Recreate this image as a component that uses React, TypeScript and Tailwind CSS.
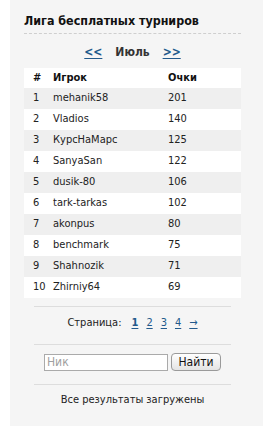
const players: [string, number][] = [
  ["mehanik58", 201],
  ["Vladios", 140],
  ["КурсНаМарс", 125],
  ["SanyaSan", 122],
  ["dusik-80", 106],
  ["tark-tarkas", 102],
  ["akonpus", 80],
  ["benchmark", 75],
  ["Shahnozik", 71],
  ["Zhirniy64", 69],
];

const link = "text-[#235a8c] underline underline-offset-2";

export default function App() {
  return (
    <div className="flex min-h-[426px] bg-white font-['DejaVu_Sans_Condensed','DejaVu_Sans',sans-serif] text-[11px] text-[#222]">
      <div className="ml-[10px] flex-1 bg-[#f5f5f5] pl-[14px] pt-[13px]">
        <div className="w-[217px]">
          <h2 className="text-[12.4px] font-bold leading-[15px] text-[#111]">
            Лига бесплатных турниров
          </h2>
          <div className="mt-[5px] border-t border-dashed border-[#cfcfcf]" />

          <div className="mt-[10px] flex h-[16px] items-center justify-center gap-[13px] text-[12px] font-bold">
            <a href="#" className={link}>
              &lt;&lt;
            </a>
            <span className="text-[#333]">Июль</span>
            <a href="#" className={link}>
              &gt;&gt;
            </a>
          </div>

          <div className="mt-[8px]">
            <div className="flex h-[20px] items-center bg-white pl-[9px] font-bold text-[#111]">
              <span className="w-[20px]">#</span>
              <span className="w-[115px]">Игрок</span>
              <span>Очки</span>
            </div>
            {players.map(([name, pts], i) => (
              <div
                key={name}
                className={
                  "flex h-[21px] items-center pl-[9px] " +
                  (i % 2 === 0 ? "bg-[#efefef]" : "bg-white")
                }
              >
                <span className="w-[20px]">{i + 1}</span>
                <span className="w-[115px]">{name}</span>
                <span>{pts}</span>
              </div>
            ))}
          </div>

          <div className="mx-[10px] mt-[8px] border-t border-[#dddddd]" />
          <div className="mt-[8px] flex h-[16px] items-center justify-center">
            <span>Страница:</span>
            <div className="ml-[10px] flex gap-[8px]">
              <a href="#" className={link + " font-bold"}>
                1
              </a>
              <a href="#" className={link}>
                2
              </a>
              <a href="#" className={link}>
                3
              </a>
              <a href="#" className={link}>
                4
              </a>
              <a href="#" className={link}>
                →
              </a>
            </div>
          </div>

          <div className="mx-[10px] mt-[13px] border-t border-[#dddddd]" />
          <div className="mt-[8px] flex items-center justify-center">
            <input
              placeholder="Ник"
              className="h-[17px] w-[124px] border border-[#aaaaaa] bg-white px-[2px] text-[12px] outline-none placeholder:text-[#a0a0a0]"
            />
            <button className="ml-[3px] h-[18px] w-[50px] rounded-[4px] border border-[#9a9a9a] bg-gradient-to-b from-white to-[#e4e4e4] text-[12px] leading-none text-[#111]">
              Найти
            </button>
          </div>

          <div className="mx-[10px] mt-[13px] border-t border-[#dddddd]" />
          <p className="mt-[7px] text-center leading-[16px]">Все результаты загружены</p>
        </div>
      </div>
    </div>
  );
}
